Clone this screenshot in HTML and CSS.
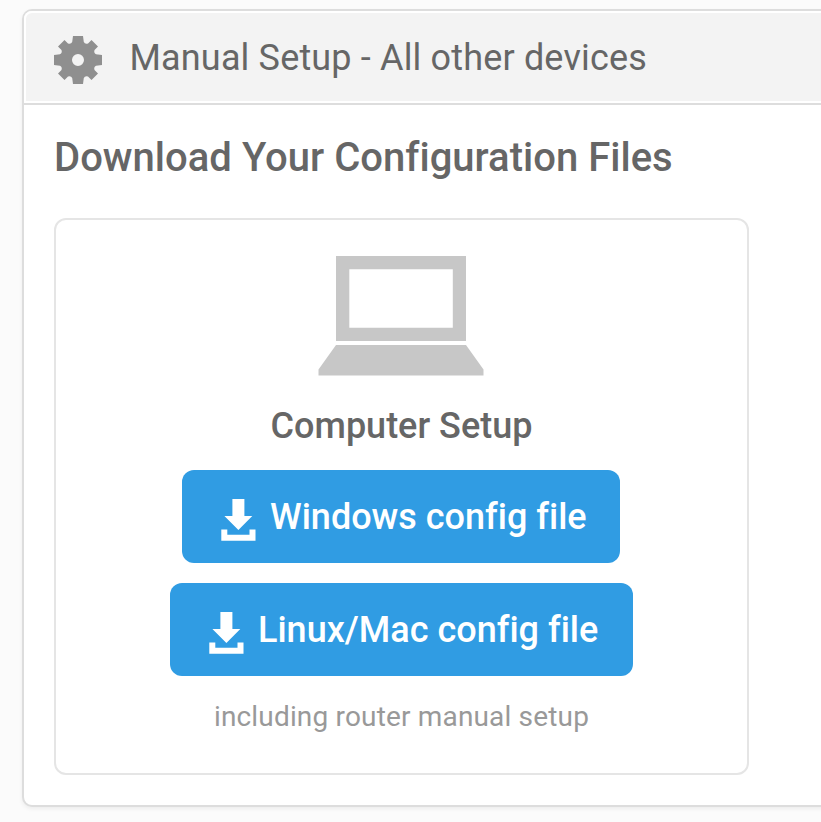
FILE: index.html
```html
<!DOCTYPE html>
<html lang="en">
<head>
<meta charset="utf-8">
<title>Manual Setup</title>
<link rel="stylesheet" href="styles.css">
</head>
<body>
<main class="panel">
  <header class="panel-header">
    <svg class="gear" viewBox="0 0 48 48"><path fill-rule="evenodd" d="M19 0H29L29.800 6Q31 8.500 34 7.500L37.500 4 44 10.500 40.500 14Q39.500 17 42 18.200L48 19V29L42 29.800Q39.500 31 40.500 34L44 37.500 37.500 44 34 40.500Q31 39.500 29.800 42L29 48H19L18.200 42Q17 39.500 14 40.500L10.500 44 4 37.500 7.500 34Q8.500 31 6 29.800L0 29V19L6 18.200Q8.500 17 7.500 14L4 10.500 10.500 4 14 7.500Q17 8.500 18.200 6zM24 18a6 6 0 1 0 0 12a6 6 0 1 0 0-12z"/></svg>
    <h1 class="panel-title">Manual Setup - All other devices</h1>
  </header>
  <section class="panel-body">
    <h2 class="heading">Download Your Configuration Files</h2>
    <div class="card">
      <svg class="laptop" viewBox="0 0 166 120"><path fill-rule="evenodd" d="M18 0h130v85H18zM31.300 13.3v58.400h103.500V13.300zM18 89h130l17.500 24.500v6H.5v-6z"/></svg>
      <h3 class="card-title">Computer Setup</h3>
      <a class="button windows"><svg class="download" viewBox="0 0 35 42"><path d="M11.400 0h12v17H31.300L17.400 31 3.400 17h8zM.3 30.400h6v5.300h22.200v-5.300h6v11.400H.3z"/></svg><span>Windows config file</span></a>
      <a class="button linux"><svg class="download" viewBox="0 0 35 42"><path d="M11.400 0h12v17H31.300L17.400 31 3.400 17h8zM.3 30.400h6v5.300h22.200v-5.300h6v11.400H.3z"/></svg><span>Linux/Mac config file</span></a>
      <p class="note">including router manual setup</p>
    </div>
  </section>
</main>
</body>
</html>
```
FILE: styles.css
```css
* { box-sizing: border-box; }
body {
  margin: 0;
  height: 822px;
  padding: 9px 0 0 22px;
  overflow: hidden;
  background: #fbfbfb;
  color: #666;
  font-family: Roboto, sans-serif;
  font-variant-ligatures: none;
}
h1, h2, h3, p { margin: 0; white-space: nowrap; }
.panel {
  width: 830px;
  height: 798px;
  border: 2px solid #ddd;
  border-radius: 10px;
  background: #fff;
  box-shadow: 0 2px 4px rgba(0, 0, 0, .06);
}
.panel-header {
  display: flex;
  align-items: center;
  height: 94px;
  padding: 2px 0 0 30px;
  border-bottom: 2px solid #ddd;
  border-radius: 8px 8px 0 0;
  background: #f3f3f3;
  box-shadow: inset 0 0 0 2px #fff;
}
.gear { width: 48px; height: 48px; margin-top: 4px; fill: #8f8f8f; }
.panel-title { margin: 0 0 0 27.5px; font-size: 36px; font-weight: 400; line-height: 42px; letter-spacing: .16px; }
.panel-body { padding: 29px 30px 0; }
.heading { font-size: 40px; font-weight: 500; line-height: 48px; letter-spacing: .02px; }
.card {
  display: flex;
  flex-direction: column;
  align-items: center;
  width: 695px;
  height: 557px;
  margin-top: 36px;
  padding-top: 36px;
  border: 2px solid #e5e5e5;
  border-radius: 12px;
}
.laptop { width: 166px; height: 120px; margin-right: 1px; fill: #c7c7c7; }
.card-title { margin: 29px 0 23px; font-size: 36px; font-weight: 500; line-height: 42px; }
.button {
  display: flex;
  height: 93px;
  padding-left: 39px;
  border-radius: 12px;
  background: #309ce3;
  color: #fff;
  font-size: 36px;
  font-weight: 500;
  line-height: 95px;
  white-space: nowrap;
}
.windows { width: 438px; margin-right: 1px; }
.linux { width: 463px; margin-top: 20px; }
.download { width: 35px; height: 42px; margin: 29px 14px 0 0; fill: #fff; }
.note { margin-top: 24px; color: #999; font-size: 28px; line-height: 34px; letter-spacing: .17px; }
```
